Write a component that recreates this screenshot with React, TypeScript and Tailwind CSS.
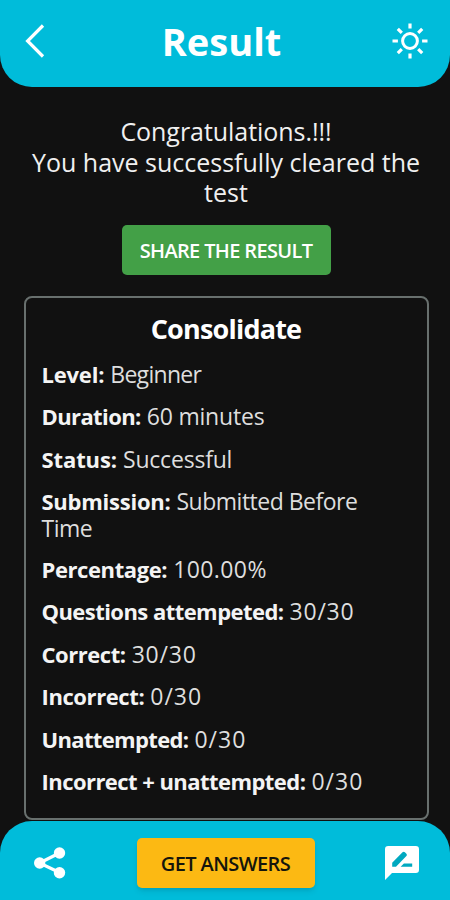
type Row = { label: string; value: string; labelClass: string; valueClass: string; rowClass: string };

const rows: Row[] = [
  { label: "Level:", value: "Beginner", labelClass: "tracking-[-0.2px]", valueClass: "tracking-[-0.7px]", rowClass: "h-[42px]" },
  { label: "Duration:", value: "60 minutes", labelClass: "tracking-[-0.6px]", valueClass: "tracking-[-0.2px]", rowClass: "h-[43px]" },
  { label: "Status:", value: "Successful", labelClass: "tracking-[-0.1px]", valueClass: "tracking-[-0.2px]", rowClass: "h-[42px]" },
  { label: "Submission:", value: "Submitted Before Time", labelClass: "tracking-[-0.25px]", valueClass: "tracking-[-0.5px]", rowClass: "h-[68px]" },
  { label: "Percentage:", value: "100.00%", labelClass: "tracking-[-0.4px]", valueClass: "tracking-[0.4px]", rowClass: "h-[42px]" },
  { label: "Questions attempeted:", value: "30/30", labelClass: "tracking-[-0.55px]", valueClass: "tracking-[0.8px]", rowClass: "h-[43px]" },
  { label: "Correct:", value: "30/30", labelClass: "tracking-[-0.45px]", valueClass: "tracking-[0.8px]", rowClass: "h-[42px]" },
  { label: "Incorrect:", value: "0/30", labelClass: "tracking-[-0.4px]", valueClass: "tracking-[1px]", rowClass: "h-[43px]" },
  { label: "Unattempted:", value: "0/30", labelClass: "tracking-[-0.65px]", valueClass: "tracking-[1px]", rowClass: "h-[42px]" },
  { label: "Incorrect + unattempted:", value: "0/30", labelClass: "tracking-[-0.55px]", valueClass: "tracking-[1px]", rowClass: "h-[27px]" },
];

function SunIcon() {
  return (
    <svg viewBox="0 0 36 36" className="h-9 w-9" fill="none" stroke="currentColor" strokeWidth="3">
      <circle cx="18" cy="18" r="7.4" />
      <path strokeWidth="3.2" d="M18 .5v5M18 30.5v5M.5 18h5.4M30.1 18h5.4M5.8 5.8l4 4M26.2 26.2l4 4M5.8 30.2l4-4M26.2 9.8l4-4" />
    </svg>
  );
}

function ShareIcon() {
  return (
    <svg viewBox="0 0 32 32" className="h-8 w-8" fill="currentColor" stroke="currentColor">
      <path fill="none" strokeWidth="3.2" d="M25.5 6 5.5 16 25.5 25.5" />
      <g stroke="none">
        <circle cx="25.5" cy="6" r="5.7" />
        <circle cx="5.7" cy="16" r="5.7" />
        <circle cx="25.5" cy="25.7" r="5.7" />
      </g>
    </svg>
  );
}

function ReviewIcon() {
  return (
    <svg viewBox="0 0 34 34" className="h-[34px] w-[34px]">
      <path fill="currentColor" d="M3.2 0h27.6A3.2 3.2 0 0 1 34 3.2v20.6a3.2 3.2 0 0 1-3.2 3.2H7L0 34V3.2A3.2 3.2 0 0 1 3.2 0Z" />
      <path fill="#00a9c0" d="M7.2 20.8v-4.1L17.5 6.3q1.2-1.2 2.4 0l1.5 1.5q1.1 1.1 0 2.3L11 20.8ZM15.6 20.8l3.3-3.3h8.3v3.3Z" />
    </svg>
  );
}

export default function App() {
  return (
    <div className="flex h-[900px] w-[450px] flex-col overflow-hidden bg-[#111111] font-['Open_Sans',sans-serif] text-[#f0f0f0]">
      <header className="flex h-[87px] shrink-0 items-center justify-between rounded-b-[32px] bg-[#00bcda] pr-[22px] pl-[25px] text-white">
        <svg viewBox="0 0 20 34" className="-mt-[5px] h-[34px] w-5" fill="none" stroke="currentColor" strokeWidth="3.2">
          <path d="M18 1.5 2.6 17 18 32.5" />
        </svg>
        <h1 className="-mt-[5px] pl-1.5 text-[38px] font-bold leading-[48px]">Result</h1>
        <div className="-mt-[5px]"><SunIcon /></div>
      </header>
      <main className="flex grow flex-col items-center pl-0.5">
        <div className="mt-[29px] flex flex-col items-center whitespace-nowrap text-[25px] leading-[30.5px]">
          <p className="tracking-[-0.05px]">Congratulations.!!!</p>
          <p>You have successfully cleared the</p>
          <p>test</p>
        </div>
        <button className="mt-[17px] h-[50px] w-[209px] whitespace-nowrap rounded-[5px] bg-[#43a047] pt-0.5 text-[20px] font-semibold tracking-[-0.65px] text-white">SHARE THE RESULT</button>
        <section className="mt-[21px] h-[524px] w-[405px] rounded-[8px] border-2 border-[#68706e] px-4">
          <h2 className="mt-[14px] text-center text-[27px] font-bold leading-[34px] tracking-[-0.8px] text-white">Consolidate</h2>
          <dl className="mt-[15px] w-[340px] text-[23px] leading-[27px]">
            {rows.map((row) => (
              <div key={row.label} className={row.rowClass}>
                <dt className={`inline whitespace-nowrap text-[22px] font-bold text-[#f4f4f4] ${row.labelClass}`}>{row.label}</dt>{" "}
                <dd className={`inline text-[#dedede] ${row.valueClass}`}>{row.value}</dd>
              </div>
            ))}
          </dl>
        </section>
      </main>
      <footer className="flex h-[79px] shrink-0 items-center justify-between rounded-t-[32px] bg-[#00bcda] pr-[31px] pl-[34px] pt-1 text-white">
        <ShareIcon />
        <button className="h-[50px] w-[178px] whitespace-nowrap rounded-[5px] bg-[#fcb913] pt-0.5 text-[20px] font-semibold tracking-[-0.6px] text-[#15150c] shadow-md">GET ANSWERS</button>
        <ReviewIcon />
      </footer>
    </div>
  );
}
